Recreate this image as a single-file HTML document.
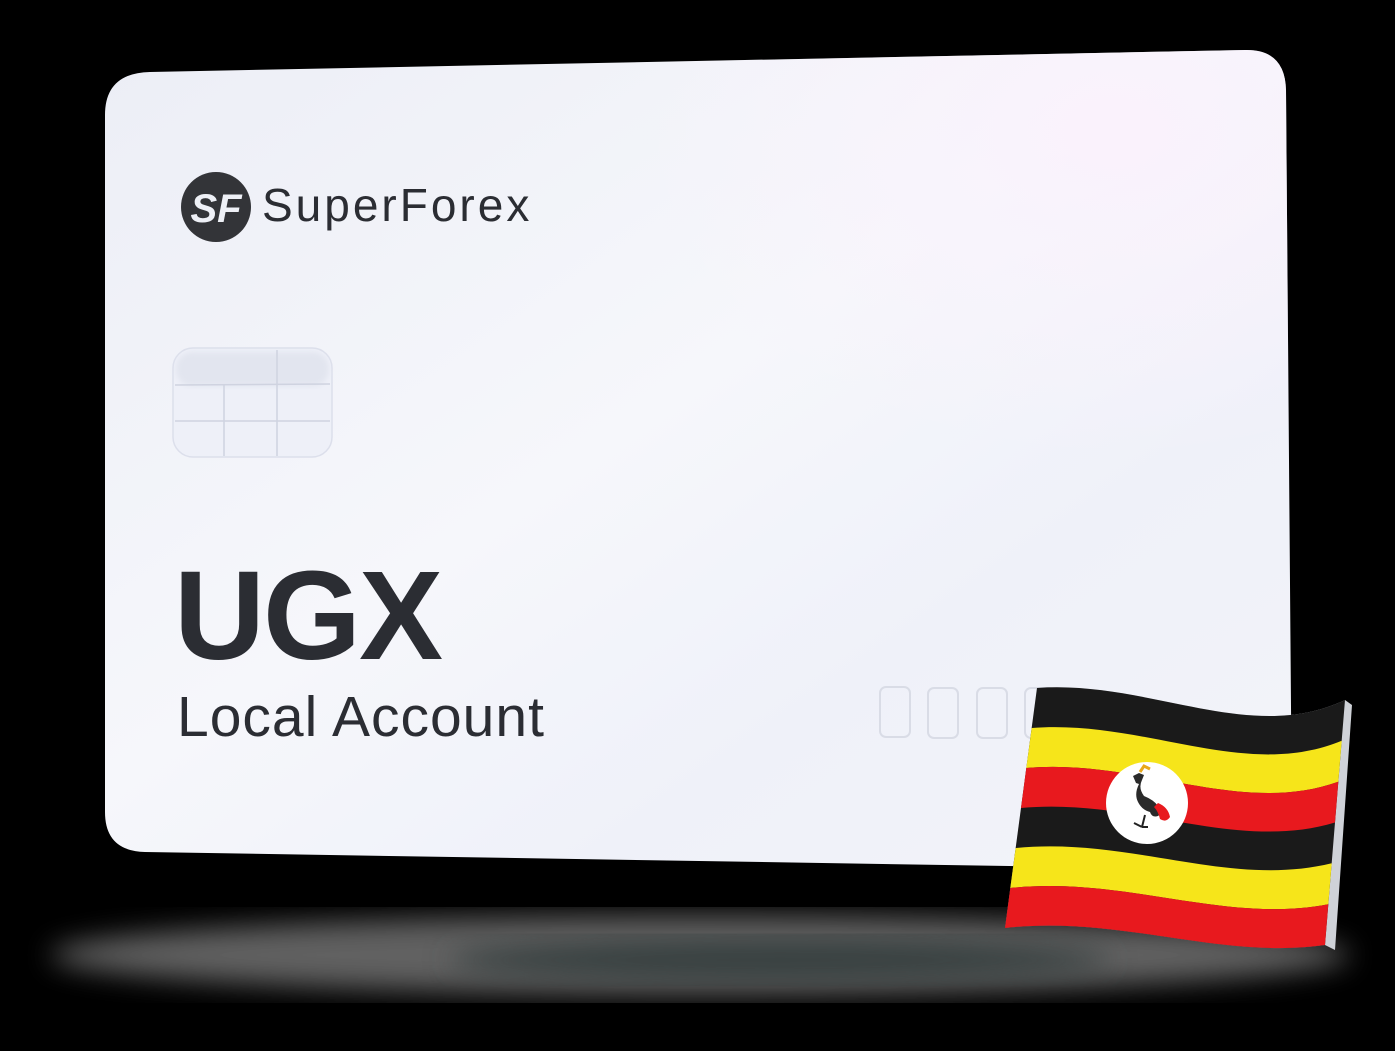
<!DOCTYPE html>
<html><head><meta charset="utf-8"><style>
html,body{margin:0;padding:0;background:#000;}
body{width:1395px;height:1051px;position:relative;overflow:hidden;font-family:"Liberation Sans",sans-serif;}
svg{position:absolute;left:0;top:0;}
.t{position:absolute;color:#2b2d33;white-space:nowrap;}
</style></head><body>
<svg width="1395" height="1051" viewBox="0 0 1395 1051">
<defs>
<linearGradient id="cg" x1="0" y1="0" x2="1" y2="1">
<stop offset="0" stop-color="#eceef6"/>
<stop offset="0.45" stop-color="#f6f7fb"/>
<stop offset="0.7" stop-color="#eff1f9"/>
<stop offset="1" stop-color="#f3f4f9"/>
</linearGradient>
<radialGradient id="pk" cx="0.85" cy="0.1" r="0.4">
<stop offset="0" stop-color="#faf2fc"/>
<stop offset="1" stop-color="#faf2fc" stop-opacity="0"/>
</radialGradient>
<filter id="bl"><feGaussianBlur stdDeviation="14"/></filter>
<filter id="bl2"><feGaussianBlur stdDeviation="3"/></filter>
</defs>
<!-- shadow -->
<g opacity="0.7">
<ellipse cx="700" cy="955" rx="650" ry="40" fill="#8a8a8a" filter="url(#bl)"/>
<ellipse cx="780" cy="960" rx="330" ry="22" fill="#4f5c5c" filter="url(#bl)"/>
</g>
<!-- card -->
<path d="M150,72 L1245,50 Q1285,49 1286,90 L1292,830 Q1292,870 1252,870 L145,852 Q105,851 105,812 L105,115 Q105,73 150,72 Z" fill="url(#cg)"/>
<path d="M150,72 L1245,50 Q1285,49 1286,90 L1292,830 Q1292,870 1252,870 L145,852 Q105,851 105,812 L105,115 Q105,73 150,72 Z" fill="url(#pk)"/>
<!-- chip -->
<rect x="173" y="348" width="159" height="109" rx="20" fill="#eef0f8" stroke="#dcdfeb" stroke-width="1.5"/>
<rect x="176" y="352" width="153" height="34" rx="16" fill="#e2e5ef" filter="url(#bl2)"/>
<g stroke="#cfd3e0" stroke-width="1.5" fill="none">
<line x1="175" y1="385" x2="330" y2="384"/><line x1="175" y1="421" x2="330" y2="421"/>
<line x1="224" y1="385" x2="224" y2="456"/><line x1="277" y1="350" x2="277" y2="456"/>
</g>
<!-- embossed boxes -->
<g stroke="#d9dce6" stroke-width="2" fill="none">
<rect x="880" y="687" width="30" height="50" rx="6"/><rect x="928" y="688" width="30" height="50" rx="6"/><rect x="977" y="688" width="30" height="50" rx="6"/><rect x="1025" y="688" width="30" height="50" rx="6"/>
</g>
<!-- logo -->
<circle cx="216" cy="207" r="35" fill="#333438"/>
<text x="216" y="222" text-anchor="middle" font-family="Liberation Sans" font-weight="bold" font-style="italic" font-size="40" fill="#eef0f6">SF</text>
<!-- flag -->
<path d="M1037,688 C1150,680 1250,745 1345,700 L1352,705 L1335,950 L1325,945 C1220,960 1120,915 1005,928 Z" fill="#cfd2d8"/>
<path d="M1037,688 C1150,680 1250,745 1345,700 L1325,945 C1220,960 1120,915 1005,928 Z" fill="#1a1a1a"/>
<path d="M1031.7,728 C1145,719.2 1245,780.8 1341.7,740.8 L1338.3,781.7 C1240,816.7 1140,758.3 1026.3,768 Z" fill="#f6e51a"/>
<path d="M1026.3,768 C1140,758.3 1240,816.7 1338.3,781.7 L1335,822.5 C1235,852.5 1135,797.5 1021,808 Z" fill="#e8191e"/>
<path d="M1015.7,848 C1130,836.7 1230,888.3 1331.7,863.3 L1328.3,904.2 C1225,924.2 1125,875.8 1010.3,888 Z" fill="#f6e51a"/>
<path d="M1010.3,888 C1125,875.8 1225,924.2 1328.3,904.2 L1325,945 C1220,960 1120,915 1005,928 Z" fill="#e8191e"/>
<circle cx="1147" cy="803" r="41" fill="#fff"/>
<path d="M1133,776 l6,-3 l5,2 l-2,5 q-4,8 2,16 q10,4 14,10 q6,6 0,10 q-6,2 -8,-4 q-8,-2 -12,-10 q-4,-8 1,-18 l-3,-1 Z" fill="#2a2a2a"/>
<path d="M1158,803 q10,4 12,14 q-4,6 -10,2 q-2,-8 -6,-12 Z" fill="#e8191e"/>
<path d="M1140,772 l4,-6 l6,3" stroke="#e8a81a" stroke-width="3" fill="none"/>
<path d="M1145,815 l-3,12 M1142,827 l-8,-4 M1142,827 l6,0" stroke="#222" stroke-width="2" fill="none"/>
</svg>
<div class="t" style="left:262px;top:178px;font-size:46px;letter-spacing:3px;">SuperForex</div>
<div class="t" style="left:174px;top:543px;font-size:126px;font-weight:bold;letter-spacing:-2px;">UGX</div>
<div class="t" style="left:177px;top:684px;font-size:57px;letter-spacing:1px;">Local Account</div>
</body></html>
